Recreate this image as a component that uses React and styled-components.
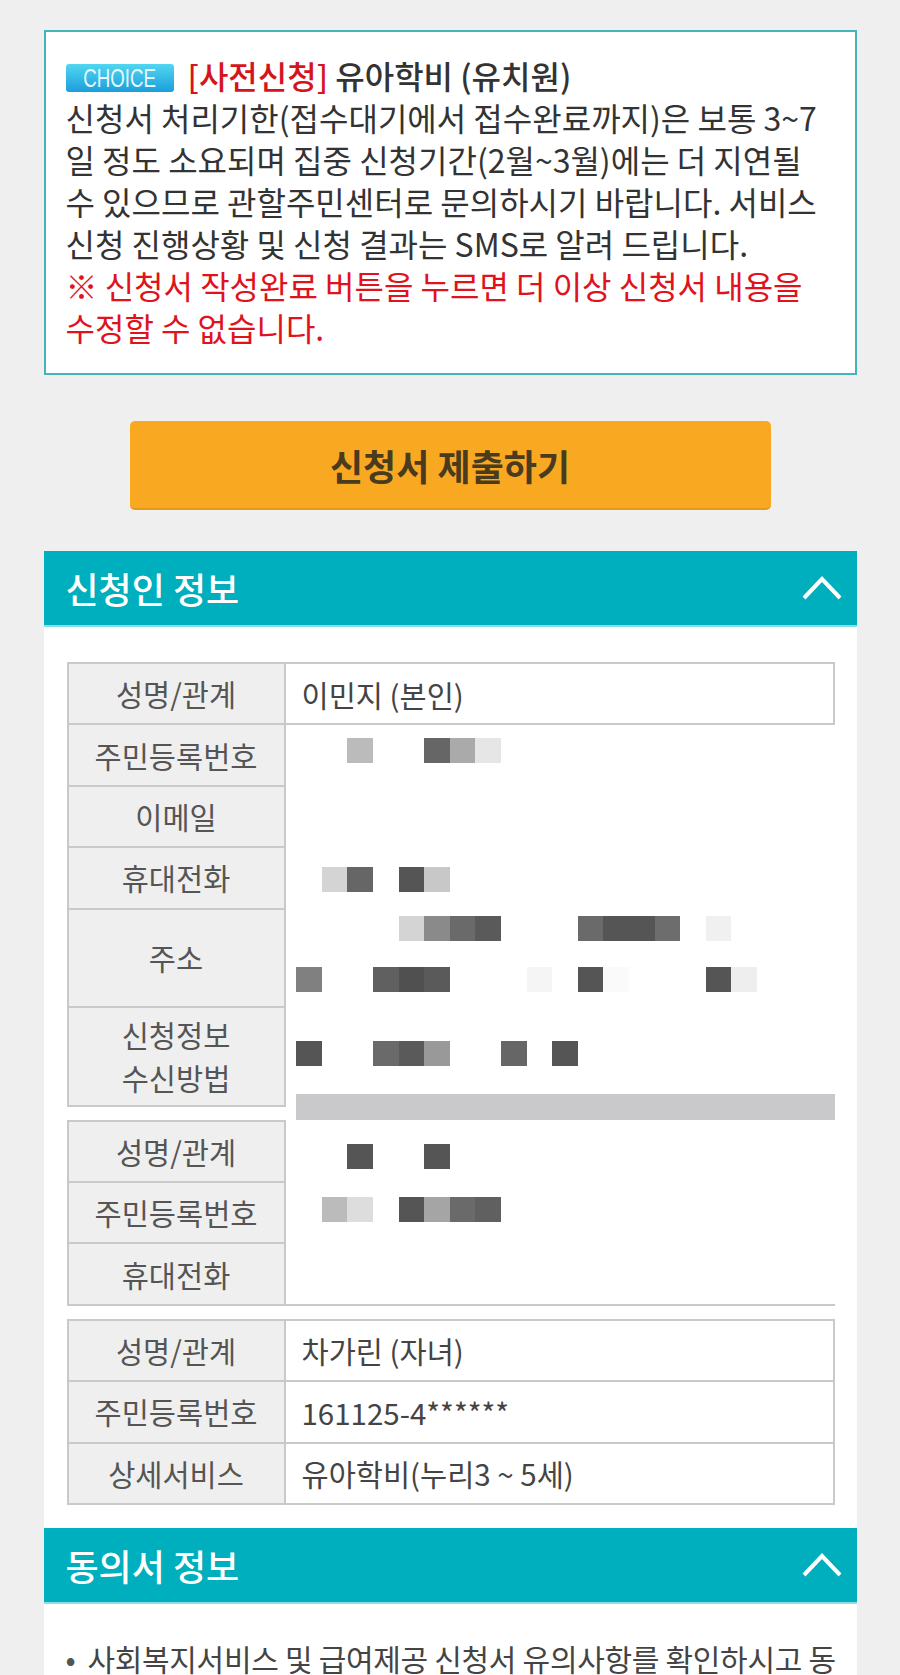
import React from 'react';
import styled, { createGlobalStyle } from 'styled-components';

const GlobalStyle = createGlobalStyle`
  html, body {
    margin: 0;
    padding: 0;
    background: #efefef;
  }
  body {
    font-family: "Noto Sans CJK KR", "Noto Sans", sans-serif;
    color: #333;
  }
`;

const Page = styled.div`
  width: 813px;
  margin: 0 auto;
  padding-top: 30px;
`;

const Notice = styled.div`
  background: #fff;
  border: 2px solid #44b4bb;
  padding: 22px 20px 25px 20px;
  font-size: 32px;
  line-height: 42px;
  white-space: nowrap;
`;

const Line = styled.div`
  color: ${p => (p.$warn ? '#e0121c' : '#333')};
  font-weight: ${p => (p.$title ? 500 : 400)};
`;

const Badge = styled.span`
  display: inline-flex;
  align-items: center;
  justify-content: center;
  width: 108px;
  height: 28px;
  margin-right: 14px;
  vertical-align: 2px;
  border-radius: 3px;
  background: linear-gradient(#52d6f1, #1c9edb);
  color: #e6f9fd;
  font-family: "Liberation Sans", Arial, sans-serif;
  font-size: 26px;
  line-height: 28px;
  span {
    display: inline-block;
    transform: scaleX(0.72);
  }
`;

const Red = styled.span`
  color: #d5141c;
`;

const SubmitButton = styled.button`
  display: block;
  width: 641px;
  height: 89px;
  margin: 46px auto 41px;
  border: none;
  border-bottom: 2px solid #e49a18;
  border-radius: 5px;
  background: #f9a921;
  color: #4a3b1e;
  font-family: "Noto Sans CJK KR", sans-serif;
  font-size: 36px;
  font-weight: 700;
`;

const SectionHead = styled.div`
  display: flex;
  align-items: center;
  justify-content: space-between;
  height: 74px;
  padding: 0 14px 0 22px;
  background: #00afbd;
  border-bottom: 2px solid #8edde2;
  color: #fff;
  font-size: 36px;
  font-weight: 500;
`;

const Body = styled.div`
  background: #fff;
  padding: ${p => p.$pad};
`;

const Table = styled.div`
  border-left: 2px solid #c9c9c9;
  margin-top: ${p => p.$gap || 0}px;
`;

const Row = styled.div`
  display: grid;
  grid-template-columns: 217px 1fr;
  &:first-child > div {
    border-top: 2px solid #c9c9c9;
  }
  &:first-child > div[data-mask='true'] {
    border-top: none;
  }
`;

const Label = styled.div`
  display: flex;
  align-items: center;
  justify-content: center;
  min-height: ${p => (p.$tall ? 96.5 : 59.4)}px;
  background: #efefef;
  border-right: 2px solid #c9c9c9;
  border-bottom: 2px solid #c9c9c9;
  color: #555;
  font-size: 29.5px;
  line-height: 43px;
  text-align: center;
`;

const Value = styled.div`
  display: flex;
  flex-direction: column;
  justify-content: ${p => (p.$mask ? 'flex-start' : 'center')};
  padding-left: ${p => (p.$mask ? 10.8 : 16)}px;
  border-right: ${p => (p.$mask ? 'none' : '2px solid #c9c9c9')};
  border-bottom: ${p => (p.$mask && !p.$bottom ? '2px solid transparent' : '2px solid #c9c9c9')};
  color: #444;
  font-size: 29.5px;
  line-height: 40px;
`;

const MosaicLine = styled.div`
  display: flex;
  height: 25px;
  margin-top: ${p => p.$top}px;
`;

const Block = styled.div`
  width: 25.6px;
  height: 25px;
  flex: none;
  background: ${p => p.$c || 'transparent'};
`;

const GreyBar = styled.div`
  height: 26px;
  margin: -13px 0 0 229px;
  background: #c9c9cc;
`;

const Bullet = styled.div`
  display: flex;
  gap: 12px;
  font-size: 30px;
  line-height: 42px;
  color: #444;
  letter-spacing: -0.3px;
  white-space: nowrap;
  &::before {
    content: '•';
    color: #555;
  }
`;

const Chevron = () => (
  <svg width="42" height="26" viewBox="0 0 42 26">
    <polyline points="3,23 21,4 39,23" fill="none" stroke="#fff" strokeWidth="4" />
  </svg>
);

const Section = ({ title, pad, children }) => (
  <>
    <SectionHead>
      <span>{title}</span>
      <Chevron />
    </SectionHead>
    <Body $pad={pad}>{children}</Body>
  </>
);

const m = (len, map) => Array.from({ length: len }, (_, i) => map[i] || '');

const table1 = [
  { label: '성명/관계', value: '이민지 (본인)' },
  { label: '주민등록번호', mask: [{ top: 13, cells: m(8, { 2: '#bbb', 5: '#666', 6: '#aaa', 7: '#e6e6e6' }) }] },
  { label: '이메일', mask: [] },
  { label: '휴대전화', mask: [{ top: 19, cells: m(6, { 1: '#d4d4d4', 2: '#666', 4: '#555', 5: '#c8c8c8' }) }] },
  {
    label: '주소',
    tall: true,
    mask: [
      { top: 6, cells: m(17, { 4: '#d4d4d4', 5: '#8a8a8a', 6: '#6a6a6a', 7: '#5a5a5a', 11: '#6a6a6a', 12: '#555', 13: '#555', 14: '#6d6d6d', 16: '#f0f0f0' }) },
      { top: 26, cells: m(18, { 0: '#808080', 3: '#606060', 4: '#505050', 5: '#5a5a5a', 9: '#f5f5f5', 11: '#555', 12: '#fafafa', 16: '#555', 17: '#eee' }) },
    ],
  },
  {
    label: ['신청정보', '수신방법'],
    tall: true,
    mask: [{ top: 33, cells: m(11, { 0: '#555', 3: '#6a6a6a', 4: '#5a5a5a', 5: '#999', 8: '#666', 10: '#555' }) }],
  },
];

const table2 = [
  { label: '성명/관계', mask: [{ top: 24, cells: m(6, { 2: '#555', 5: '#555' }) }] },
  { label: '주민등록번호', mask: [{ top: 14, cells: m(8, { 1: '#bbb', 2: '#ddd', 4: '#555', 5: '#a5a5a5', 6: '#6a6a6a', 7: '#606060' }) }] },
  { label: '휴대전화', mask: [], bottom: true },
];

const table3 = [
  { label: '성명/관계', value: '차가린 (자녀)' },
  { label: '주민등록번호', value: '161125-4******' },
  { label: '상세서비스', value: '유아학비(누리3 ~ 5세)' },
];

const InfoTable = ({ rows, gap }) => (
  <Table $gap={gap}>
    {rows.map((r, i) => (
      <Row key={i}>
        <Label $tall={r.tall}>
          {Array.isArray(r.label) ? (
            <div>
              {r.label[0]}
              <br />
              {r.label[1]}
            </div>
          ) : (
            r.label
          )}
        </Label>
        <Value $mask={!!r.mask} $bottom={r.bottom} data-mask={r.mask ? 'true' : 'false'}>
          {r.mask
            ? r.mask.map((line, j) => (
                <MosaicLine key={j} $top={line.top}>
                  {line.cells.map((c, k) => (
                    <Block key={k} $c={c} />
                  ))}
                </MosaicLine>
              ))
            : r.value}
        </Value>
      </Row>
    ))}
  </Table>
);

const App = () => (
  <>
    <GlobalStyle />
    <Page>
      <Notice>
        <Line $title>
          <Badge>
            <span>CHOICE</span>
          </Badge>
          <Red>[사전신청]</Red> 유아학비 (유치원)
        </Line>
        <Line>신청서 처리기한(접수대기에서 접수완료까지)은 보통 3~7</Line>
        <Line>일 정도 소요되며 집중 신청기간(2월~3월)에는 더 지연될</Line>
        <Line>수 있으므로 관할주민센터로 문의하시기 바랍니다. 서비스</Line>
        <Line>신청 진행상황 및 신청 결과는 SMS로 알려 드립니다.</Line>
        <Line $warn>※ 신청서 작성완료 버튼을 누르면 더 이상 신청서 내용을</Line>
        <Line $warn>수정할 수 없습니다.</Line>
      </Notice>

      <SubmitButton>신청서 제출하기</SubmitButton>

      <Section title="신청인 정보" pad="35px 22px 23px 23px">
        <InfoTable rows={table1} />
        <GreyBar />
        <InfoTable rows={table2} />
        <InfoTable rows={table3} gap={13} />
      </Section>

      <Section title="동의서 정보" pad="33px 22px 40px 22px">
        <Bullet>
          <span>
            사회복지서비스 및 급여제공 신청서 유의사항를 확인하시고 동
            <br />
            의하여 주시기 바랍니다.
          </span>
        </Bullet>
      </Section>
    </Page>
  </>
);

export default App;
